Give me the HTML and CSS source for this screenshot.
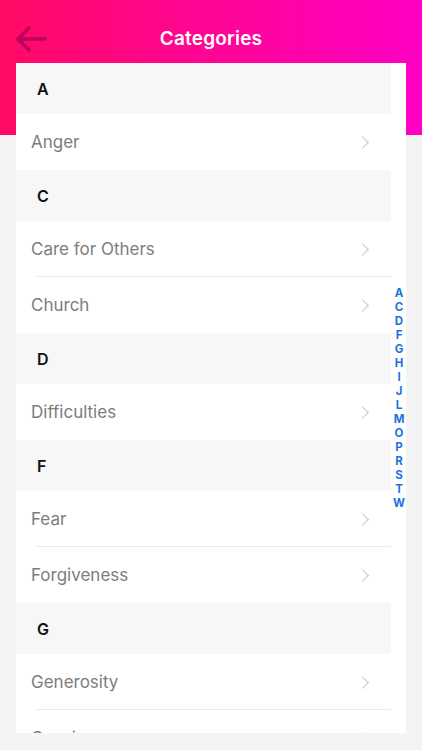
FILE: index.html
```html
<!DOCTYPE html>
<html>
<head>
<meta charset="utf-8">
<link rel="stylesheet" href="styles.css">
</head>
<body>
<header class="topbar">
  <div class="titlebar">
    <svg class="back" width="32" height="28" viewBox="0 0 32 28">
      <path d="M30 14H3M14 3L3 14l11 11" fill="none" stroke="#bc005c" stroke-width="3.6" stroke-linecap="round" stroke-linejoin="round"/>
    </svg>
    <h1 class="title">Categories</h1>
  </div>
</header>
<main class="card">
  <div class="list">
    <div class="sec">A</div>
    <div class="row last"><span>Anger</span><i class="chev"></i></div>
    <div class="sec">C</div>
    <div class="row"><span>Care for Others</span><i class="chev"></i></div>
    <div class="row last"><span>Church</span><i class="chev"></i></div>
    <div class="sec">D</div>
    <div class="row last"><span>Difficulties</span><i class="chev"></i></div>
    <div class="sec">F</div>
    <div class="row"><span>Fear</span><i class="chev"></i></div>
    <div class="row last"><span>Forgiveness</span><i class="chev"></i></div>
    <div class="sec">G</div>
    <div class="row"><span>Generosity</span><i class="chev"></i></div>
    <div class="row"><span>Gossip</span><i class="chev"></i></div>
  </div>
  <nav class="index">
    <span>A</span><span>C</span><span>D</span><span>F</span><span>G</span><span>H</span><span>I</span><span>J</span><span>L</span><span>M</span><span>O</span><span>P</span><span>R</span><span>S</span><span>T</span><span>W</span>
  </nav>
</main>
</body>
</html>
```
FILE: styles.css
```css
html, body {
  margin: 0;
  padding: 0;
  background: #f4f4f4;
  height: 750px;
  overflow: hidden;
  font-family: Inter, "Liberation Sans", sans-serif;
}
.topbar {
  height: 135px;
  background: linear-gradient(90deg, #ff0a64 0%, #ff0596 50%, #ff00c4 100%);
}
.titlebar {
  height: 76px;
  display: flex;
  align-items: center;
  justify-content: center;
  position: relative;
}
.back {
  position: absolute;
  left: 15px;
  top: 25px;
}
.title {
  margin: 0;
  color: #fff;
  font-size: 19px;
  font-weight: 600;
  letter-spacing: 0.2px;
}
.card {
  margin: -72px 16px 0 16px;
  height: 670px;
  background: #fff;
  display: flex;
  overflow: hidden;
}
.list {
  width: 375px;
  flex: none;
}
.sec {
  height: 51px;
  background: #f7f7f7;
  display: flex;
  align-items: center;
  padding-left: 21px;
  font-size: 16px;
  font-weight: 600;
  color: #111;
}
.row {
  height: 56px;
  box-sizing: border-box;
  display: flex;
  align-items: center;
  justify-content: space-between;
  padding: 0 22px 0 15px;
  font-size: 17px;
  color: #7d7d7d;
  position: relative;
}
.row::after {
  content: "";
  position: absolute;
  left: 20px;
  right: 0;
  bottom: 0;
  height: 1px;
  background: #ececec;
}
.row.last::after {
  display: none;
}
.chev {
  width: 8px;
  height: 8px;
  border-top: 1.6px solid #c4c4c4;
  border-right: 1.6px solid #c4c4c4;
  transform: rotate(45deg);
  margin-right: 2px;
}
.index {
  flex: 1;
  display: flex;
  flex-direction: column;
  align-items: center;
  justify-content: center;
  padding-left: 1px;
}
.index span {
  font-size: 11.5px;
  font-weight: 700;
  line-height: 14px;
  color: #1b73e0;
  font-family: Inter, "Liberation Sans", sans-serif;
}
```
